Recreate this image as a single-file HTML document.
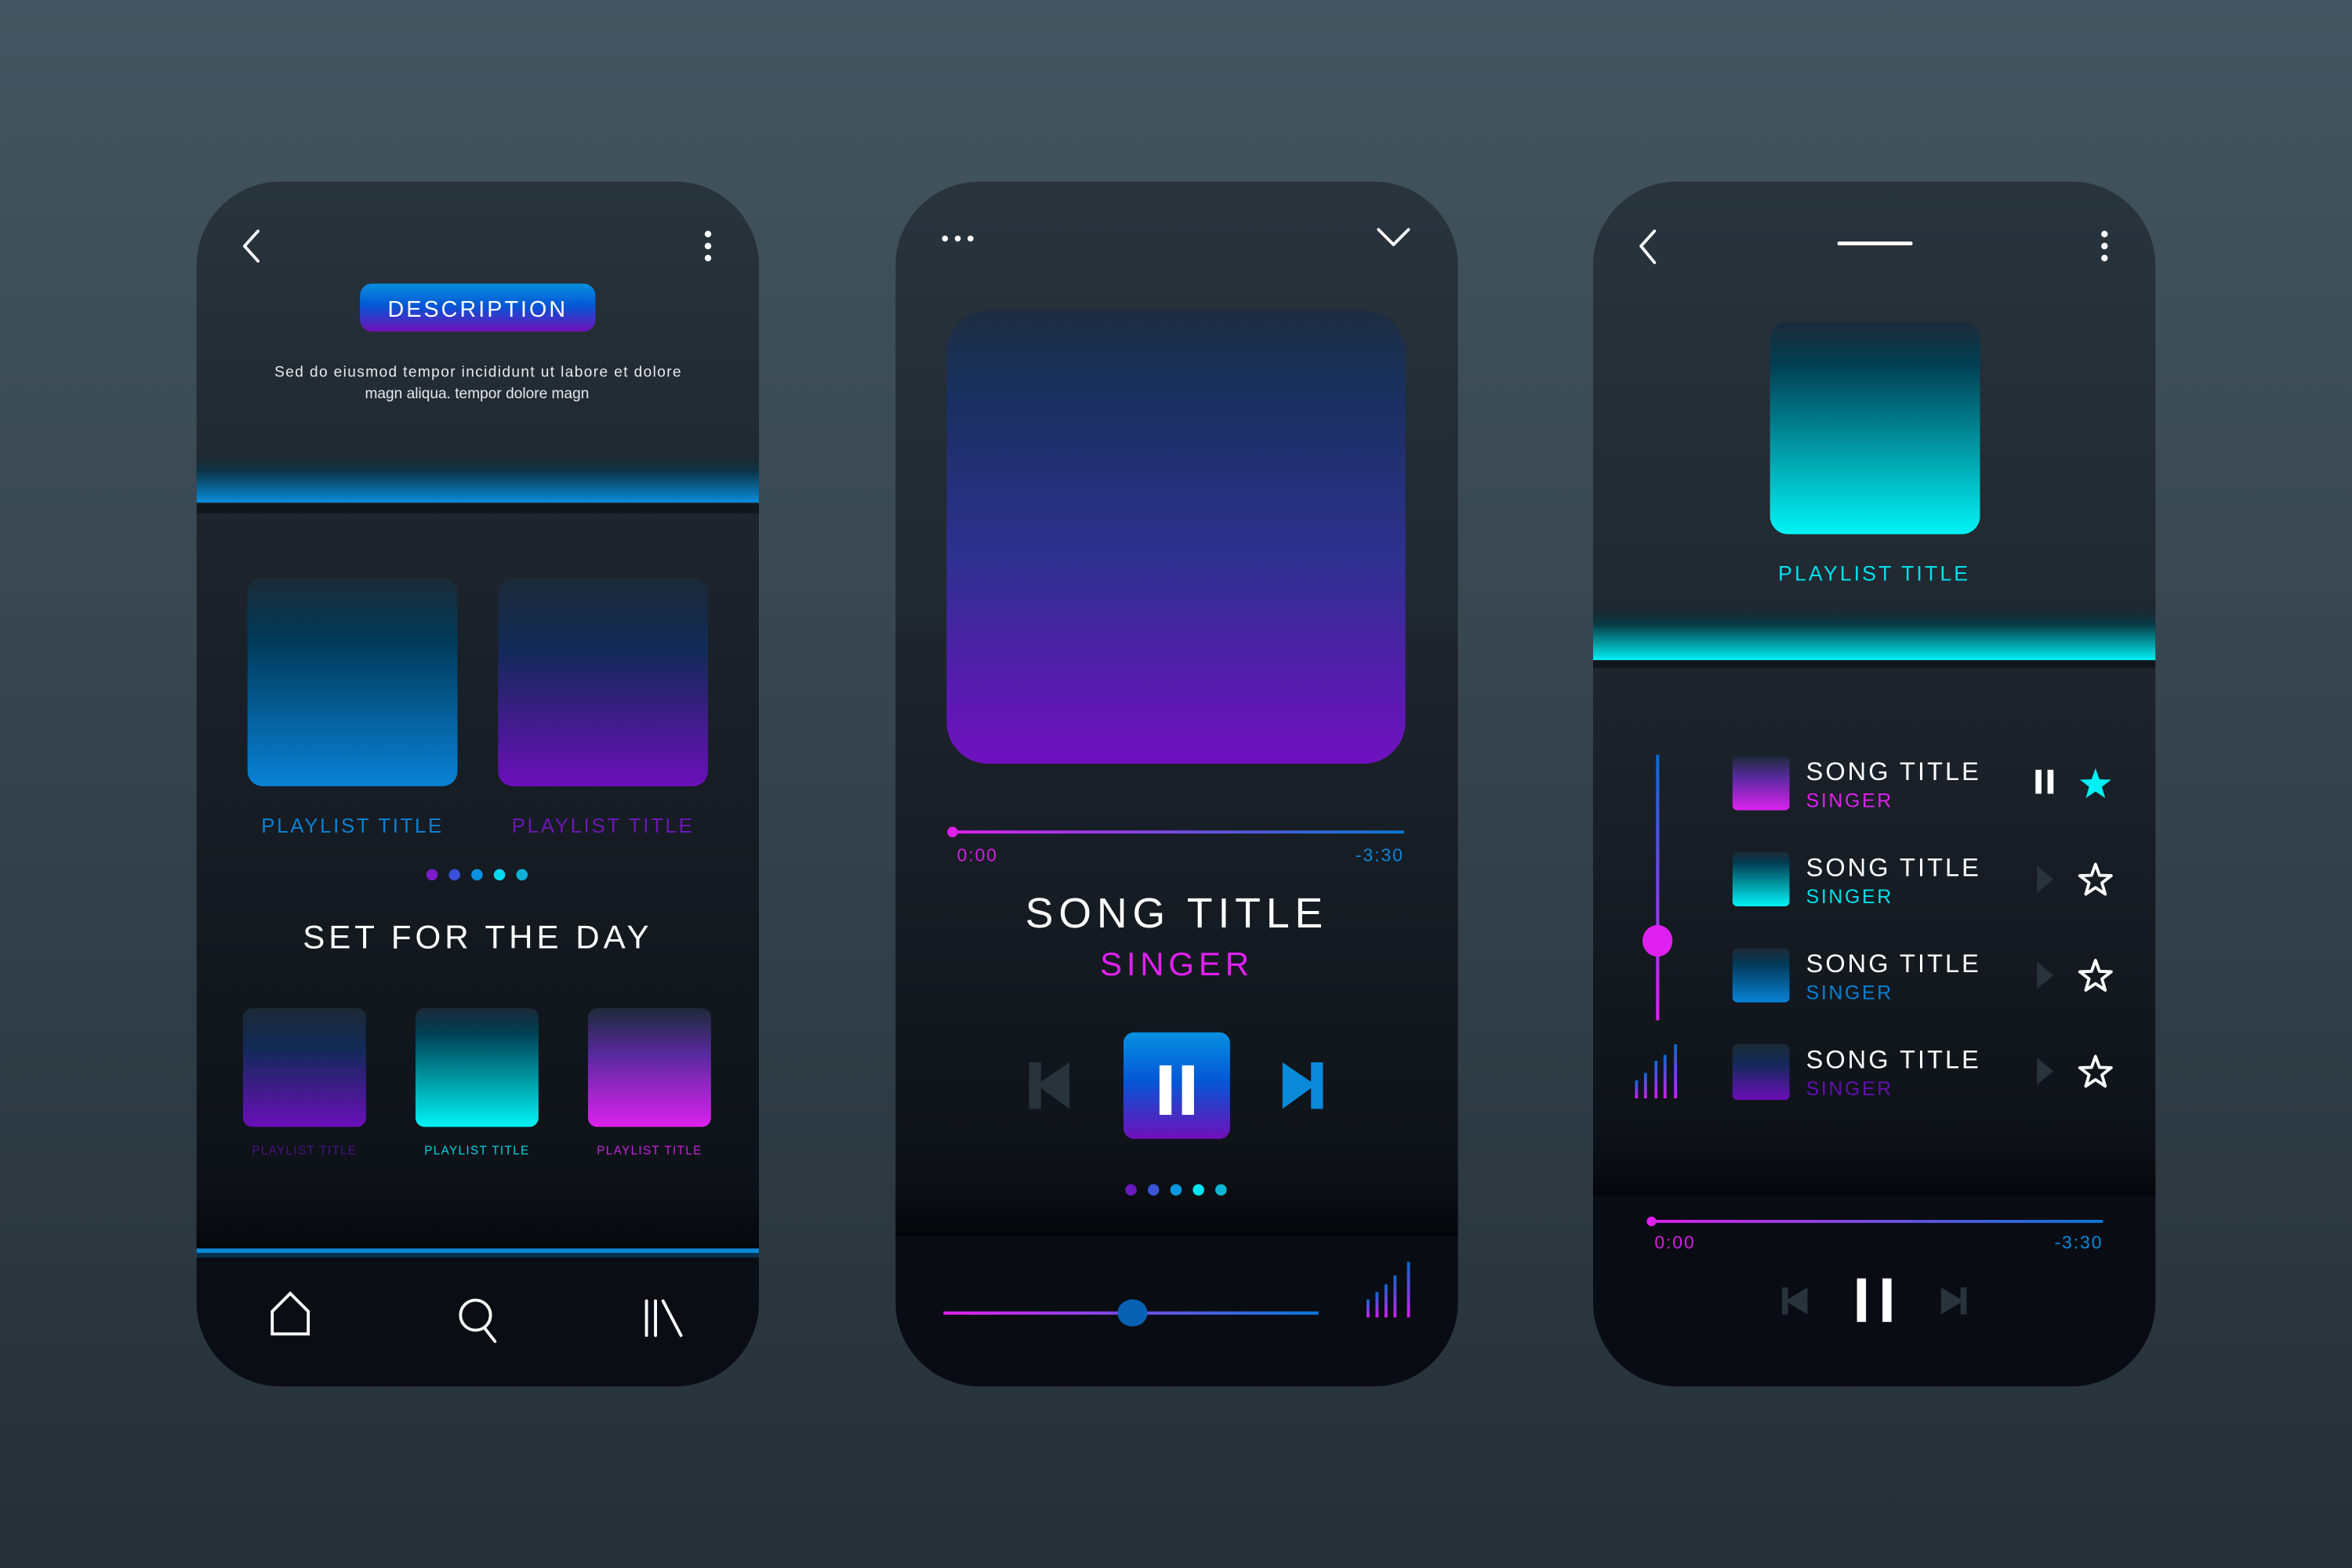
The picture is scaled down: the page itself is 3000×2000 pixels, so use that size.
<!DOCTYPE html>
<html><head><meta charset="utf-8"><style>
html,body{margin:0;padding:0;width:3000px;height:2000px;overflow:hidden;background:#354550}
svg{display:block}
text{font-family:"Liberation Sans",sans-serif}
</style></head><body>
<svg width="3000" height="2000" viewBox="0 0 1568 1045" preserveAspectRatio="none" xmlns="http://www.w3.org/2000/svg">
<defs>
<linearGradient id="bg" x1="0" y1="0" x2="0" y2="1"><stop offset="0" stop-color="#445661"/><stop offset="1" stop-color="#262f37"/></linearGradient>
<linearGradient id="top" x1="0" y1="0" x2="0" y2="1"><stop offset="0" stop-color="#29343d"/><stop offset="1" stop-color="#1f272f"/></linearGradient>
<linearGradient id="bot" x1="0" y1="0" x2="0" y2="1"><stop offset="0" stop-color="#1e252d"/><stop offset="1" stop-color="#0c1016"/></linearGradient>
<linearGradient id="bandB" x1="0" y1="0" x2="0" y2="1"><stop offset="0" stop-color="#1f272f" stop-opacity="0"/><stop offset="0.4" stop-color="#0a3446"/><stop offset="1" stop-color="#0a8ddc"/></linearGradient>
<linearGradient id="bandC" x1="0" y1="0" x2="0" y2="1"><stop offset="0" stop-color="#1c242c" stop-opacity="0"/><stop offset="0.4" stop-color="#073a44"/><stop offset="1" stop-color="#00f0f4"/></linearGradient>
<linearGradient id="btn" x1="0" y1="0" x2="0" y2="1"><stop offset="0" stop-color="#0890e0"/><stop offset="0.45" stop-color="#0358d6"/><stop offset="1" stop-color="#7010b8"/></linearGradient>
<linearGradient id="gBlue" x1="0" y1="0" x2="0" y2="1"><stop offset="0" stop-color="#1c2a36"/><stop offset="0.3" stop-color="#013a5a"/><stop offset="1" stop-color="#0882d6"/></linearGradient>
<linearGradient id="gPurp" x1="0" y1="0" x2="0" y2="1"><stop offset="0" stop-color="#1c2a36"/><stop offset="0.35" stop-color="#122a58"/><stop offset="1" stop-color="#6a0fba"/></linearGradient>
<linearGradient id="gCyan" x1="0" y1="0" x2="0" y2="1"><stop offset="0" stop-color="#1c2a38"/><stop offset="0.2" stop-color="#003e52"/><stop offset="1" stop-color="#00f4f6"/></linearGradient>
<linearGradient id="gMag" x1="0" y1="0" x2="0" y2="1"><stop offset="0" stop-color="#1c2a3a"/><stop offset="0.4" stop-color="#5a2aa0"/><stop offset="1" stop-color="#dc22ee"/></linearGradient>
<linearGradient id="gArt" x1="0" y1="0" x2="0" y2="1"><stop offset="0" stop-color="#1d2c40"/><stop offset="0.15" stop-color="#18305a"/><stop offset="0.55" stop-color="#2e3090"/><stop offset="1" stop-color="#7010c0"/></linearGradient>
<linearGradient id="prog" x1="0" y1="0" x2="1" y2="0"><stop offset="0" stop-color="#e020f0"/><stop offset="1" stop-color="#0a78d8"/></linearGradient>
<linearGradient id="vprog" x1="0" y1="0" x2="0" y2="1"><stop offset="0" stop-color="#0a6ad0"/><stop offset="1" stop-color="#e020f0"/></linearGradient>
<linearGradient id="bars" x1="0" y1="0" x2="0" y2="1"><stop offset="0" stop-color="#0a6ad0"/><stop offset="1" stop-color="#d020f0"/></linearGradient>
<linearGradient id="fade" x1="0" y1="0" x2="0" y2="1"><stop offset="0" stop-color="#0c1016" stop-opacity="0"/><stop offset="1" stop-color="#04060a"/></linearGradient>
<clipPath id="c1"><rect x="131" y="121" width="375" height="803" rx="56"/></clipPath>
<clipPath id="c2"><rect x="597" y="121" width="375" height="803" rx="56"/></clipPath>
<clipPath id="c3"><rect x="1062" y="121" width="375" height="803" rx="56"/></clipPath>
<path id="star" d="M0,-11 L2.65,-3.64 L10.46,-3.4 L4.28,1.39 L6.47,8.9 L0,4.5 L-6.47,8.9 L-4.28,1.39 L-10.46,-3.4 L-2.65,-3.64Z"/>
</defs>
<rect width="1568" height="1045" fill="url(#bg)"/>

<!-- PHONE 1 -->
<g clip-path="url(#c1)">
<rect x="131" y="121" width="375" height="215" fill="url(#top)"/>
<rect x="131" y="300" width="375" height="35" fill="url(#bandB)"/>
<rect x="131" y="335" width="375" height="500" fill="url(#bot)"/>
<rect x="131" y="336" width="375" height="6" fill="#0a0e13" opacity="0.6"/>
<rect x="131" y="780" width="375" height="53" fill="url(#fade)"/>
<rect x="131" y="833" width="375" height="91" fill="#0a0e14"/>
<rect x="131" y="832" width="375" height="3" fill="#0a88d8"/>
<rect x="131" y="835" width="375" height="3" fill="#0a4a78" opacity="0.6"/>
</g>
<path d="M172,154 L163,164 L172,174" fill="none" stroke="#fff" stroke-width="2" stroke-linecap="round" stroke-linejoin="round"/>
<circle cx="472" cy="156" r="2.2" fill="#fff"/><circle cx="472" cy="164" r="2.2" fill="#fff"/><circle cx="472" cy="172" r="2.2" fill="#fff"/>
<rect x="240" y="189" width="157" height="32" rx="8" fill="url(#btn)"/>
<text x="318.5" y="211" text-anchor="middle" fill="#fff" font-size="15" letter-spacing="1.6">DESCRIPTION</text>
<text x="183" y="251" fill="#e8eaec" font-size="10" textLength="271" lengthAdjust="spacing">Sed do eiusmod tempor incididunt ut labore et dolore</text>
<text x="318" y="265.5" text-anchor="middle" fill="#e8eaec" font-size="10">magn aliqua. tempor dolore magn</text>
<rect x="165" y="385" width="140" height="139" rx="10" fill="url(#gBlue)"/>
<rect x="332" y="385" width="140" height="139" rx="10" fill="url(#gPurp)"/>
<text x="235" y="555" text-anchor="middle" fill="#0a80d4" font-size="13.5" letter-spacing="1.4">PLAYLIST TITLE</text>
<text x="402" y="555" text-anchor="middle" fill="#6a18b4" font-size="13.5" letter-spacing="1.4">PLAYLIST TITLE</text>
<circle cx="288" cy="583" r="3.8" fill="#7a1cc8"/><circle cx="303" cy="583" r="3.8" fill="#3a50d8"/><circle cx="318" cy="583" r="3.8" fill="#0a90e0"/><circle cx="333" cy="583" r="3.8" fill="#00d8ee"/><circle cx="348" cy="583" r="3.8" fill="#10b0d8"/>
<text x="318.5" y="632" text-anchor="middle" fill="#fff" font-size="22" letter-spacing="2.6">SET FOR THE DAY</text>
<rect x="162" y="672" width="82" height="79" rx="6" fill="url(#gPurp)"/>
<rect x="277" y="672" width="82" height="79" rx="6" fill="url(#gCyan)"/>
<rect x="392" y="672" width="82" height="79" rx="6" fill="url(#gMag)"/>
<text x="203" y="769.5" text-anchor="middle" fill="#4a1288" font-size="8" letter-spacing="0.7">PLAYLIST TITLE</text>
<text x="318" y="769.5" text-anchor="middle" fill="#00d4e4" font-size="8" letter-spacing="0.7">PLAYLIST TITLE</text>
<text x="433" y="769.5" text-anchor="middle" fill="#c822dc" font-size="8" letter-spacing="0.7">PLAYLIST TITLE</text>
<path d="M181.5,889 L181.5,874 L193.5,862 L205.5,874 L205.5,889 Z" fill="none" stroke="#fff" stroke-width="2" stroke-linejoin="miter"/>
<circle cx="317" cy="876.5" r="10" fill="none" stroke="#fff" stroke-width="2"/>
<path d="M323,885 L330,894" stroke="#fff" stroke-width="2" stroke-linecap="round"/>
<path d="M431,867 L431,890 M437,867 L437,890 M442,867 L454,890" stroke="#fff" stroke-width="2" stroke-linecap="round"/>

<!-- PHONE 2 -->
<g clip-path="url(#c2)">
<rect x="597" y="121" width="375" height="300" fill="url(#top)"/>
<rect x="597" y="420" width="375" height="404" fill="url(#bot)"/>
<rect x="597" y="760" width="375" height="64" fill="url(#fade)"/>
<rect x="597" y="824" width="375" height="100" fill="#090d13"/>
</g>
<circle cx="630" cy="159" r="2" fill="#fff"/><circle cx="638.5" cy="159" r="2" fill="#fff"/><circle cx="647" cy="159" r="2" fill="#fff"/>
<path d="M919,153 L929,163 L939,153" fill="none" stroke="#fff" stroke-width="2" stroke-linecap="round" stroke-linejoin="round"/>
<rect x="631" y="207" width="306" height="302" rx="28" fill="url(#gArt)"/>
<rect x="635" y="553.5" width="301" height="2" fill="url(#prog)"/>
<circle cx="635" cy="554.5" r="3.5" fill="#e020f0"/>
<text x="638" y="574" fill="#d020e0" font-size="12" letter-spacing="1">0:00</text>
<text x="936" y="574" text-anchor="end" fill="#0a88d8" font-size="12" letter-spacing="1">-3:30</text>
<text x="784.5" y="618" text-anchor="middle" fill="#fff" font-size="28" letter-spacing="3.6">SONG TITLE</text>
<text x="784.5" y="650" text-anchor="middle" fill="#e020f0" font-size="22" letter-spacing="3">SINGER</text>
<rect x="686" y="708" width="8" height="31" fill="#28333b"/>
<path d="M691,723 L713,708 L713,739 Z" fill="#28333b"/>
<rect x="749" y="688" width="71" height="71" rx="7" fill="url(#btn)"/>
<rect x="773" y="710" width="8" height="33" fill="#fff"/><rect x="788" y="710" width="8" height="33" fill="#fff"/>
<path d="M855,708 L877,723 L855,739 Z" fill="#0a8ad8"/>
<rect x="874" y="708" width="8" height="31" fill="#0a8ad8"/>
<circle cx="754" cy="793" r="3.8" fill="#6a18c0"/><circle cx="769" cy="793" r="3.8" fill="#3a56d4"/><circle cx="784" cy="793" r="3.8" fill="#0a98e0"/><circle cx="799" cy="793" r="3.8" fill="#00e4f0"/><circle cx="814" cy="793" r="3.8" fill="#10b4d4"/>
<rect x="629" y="874" width="250" height="2.2" fill="url(#prog)"/>
<ellipse cx="755" cy="875" rx="10" ry="9" fill="#0862b4"/>
<g fill="url(#bars)"><rect x="911" y="866" width="2" height="12"/><rect x="917" y="861" width="2" height="17"/><rect x="923" y="856" width="2" height="22"/><rect x="929" y="850" width="2" height="28"/><rect x="938" y="841" width="2" height="37"/></g>

<!-- PHONE 3 -->
<g clip-path="url(#c3)">
<rect x="1062" y="121" width="375" height="320" fill="url(#top)"/>
<rect x="1062" y="400" width="375" height="40" fill="url(#bandC)"/>
<rect x="1062" y="440" width="375" height="357" fill="url(#bot)"/>
<rect x="1062" y="440" width="375" height="5" fill="#080b10" opacity="0.6"/>
<rect x="1062" y="745" width="375" height="52" fill="url(#fade)"/>
<rect x="1062" y="797" width="375" height="127" fill="#090d13"/>
</g>
<path d="M1103,154 L1094,164 L1103,175" fill="none" stroke="#fff" stroke-width="2" stroke-linecap="round" stroke-linejoin="round"/>
<rect x="1225" y="161" width="50" height="2.5" rx="1" fill="#fff"/>
<circle cx="1403" cy="156" r="2.2" fill="#fff"/><circle cx="1403" cy="164" r="2.2" fill="#fff"/><circle cx="1403" cy="172" r="2.2" fill="#fff"/>
<rect x="1180" y="214" width="140" height="142" rx="12" fill="url(#gCyan)"/>
<text x="1249.5" y="387" text-anchor="middle" fill="#00e0ec" font-size="14" letter-spacing="1.6">PLAYLIST TITLE</text>
<rect x="1104" y="503" width="2.2" height="177" fill="url(#vprog)"/>
<ellipse cx="1105" cy="627" rx="10" ry="10.5" fill="#e020f0"/>
<g fill="url(#bars)"><rect x="1090" y="720" width="2" height="12"/><rect x="1096" y="715" width="2" height="17"/><rect x="1103" y="707" width="2" height="25"/><rect x="1109" y="703" width="2" height="29"/><rect x="1116" y="696" width="2" height="36"/></g>
<rect x="1155" y="504" width="38" height="36" rx="3" fill="url(#gMag)"/>
<rect x="1155" y="568" width="38" height="36" rx="3" fill="url(#gCyan)"/>
<rect x="1155" y="632" width="38" height="36" rx="3" fill="url(#gBlue)"/>
<rect x="1155" y="696" width="38" height="37" rx="3" fill="url(#gPurp)"/>
<g font-size="17" fill="#fff" letter-spacing="1.6">
<text x="1204" y="520">SONG TITLE</text><text x="1204" y="584">SONG TITLE</text><text x="1204" y="648">SONG TITLE</text><text x="1204" y="712">SONG TITLE</text>
</g>
<g font-size="13" letter-spacing="1.4">
<text x="1204" y="538" fill="#e020f0">SINGER</text><text x="1204" y="602" fill="#00e0ec">SINGER</text><text x="1204" y="666" fill="#0a80d4">SINGER</text><text x="1204" y="730" fill="#6010b0">SINGER</text>
</g>
<rect x="1357" y="513" width="4" height="16" fill="#fff"/><rect x="1365" y="513" width="4" height="16" fill="#fff"/>
<use href="#star" transform="translate(1397,523)" fill="#00f0f4"/>
<g fill="#28333b"><path d="M1358,577 L1369,586 L1358,595Z"/><path d="M1358,641 L1369,650 L1358,659Z"/><path d="M1358,705 L1369,714 L1358,723Z"/></g>
<g fill="none" stroke="#fff" stroke-width="2" stroke-linejoin="round">
<use href="#star" transform="translate(1397,587)"/><use href="#star" transform="translate(1397,651)"/><use href="#star" transform="translate(1397,715)"/>
</g>
<rect x="1100" y="813" width="302" height="2" fill="url(#prog)"/>
<circle cx="1101" cy="814" r="3.2" fill="#e020f0"/>
<text x="1103" y="832" fill="#d020e0" font-size="12" letter-spacing="1">0:00</text>
<text x="1402" y="832" text-anchor="end" fill="#0a88d8" font-size="12" letter-spacing="1">-3:30</text>
<rect x="1188" y="858" width="4" height="18" fill="#28333b"/><path d="M1190,867 L1205,858 L1205,876Z" fill="#28333b"/>
<rect x="1238" y="852" width="6" height="29" fill="#fff"/><rect x="1255" y="852" width="6" height="29" fill="#fff"/>
<path d="M1294,858 L1309,867 L1294,876Z" fill="#28333b"/><rect x="1307" y="858" width="4" height="18" fill="#28333b"/>
</svg>
</body></html>
